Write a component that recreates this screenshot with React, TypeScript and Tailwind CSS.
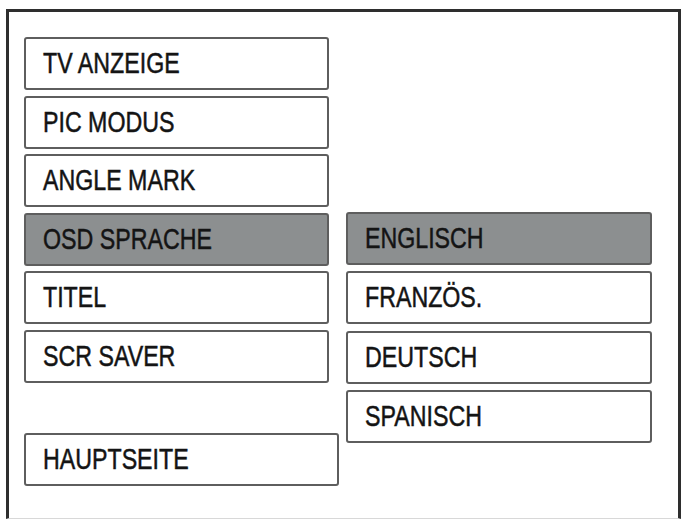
const leftItems = ["TV ANZEIGE", "PIC MODUS", "ANGLE MARK", "OSD SPRACHE", "TITEL", "SCR SAVER"];
const langItems = ["ENGLISCH", "FRANZÖS.", "DEUTSCH", "SPANISCH"];

function MenuBox({ label, active, width }: { label: string; active?: boolean; width: string }) {
  return (
    <div
      className={`flex h-[53px] shrink-0 items-center rounded-[3px] border-2 border-[#5e5e5e] pl-[17px] ${width} ${
        active ? "bg-[#8c8f90]" : "bg-white"
      }`}
    >
      <span className="inline-block origin-left scale-x-[0.8] whitespace-nowrap text-[29px] leading-none text-[#141414] [-webkit-text-stroke:0.5px_#141414] [font-family:'Liberation_Sans',Arial,sans-serif]">
        {label}
      </span>
    </div>
  );
}

export default function App() {
  return (
    <div className="h-[521px] w-[682px] overflow-hidden bg-white">
      <div className="ml-[6px] mt-[9px] flex h-[510px] w-[675px] gap-[7px] border-x-[3px] border-t-[3px] border-b border-x-[#2e2e2e] border-t-[#2e2e2e] border-b-[#d8d8d8] pl-[15px] pt-[25px]">
        <div className="flex flex-col">
          <div className="flex w-[305px] flex-col gap-[5.6px]">
            {leftItems.map((l) => (
              <MenuBox key={l} label={l} active={l === "OSD SPRACHE"} width="w-[305px]" />
            ))}
          </div>
          <div className="mt-[50px]">
            <MenuBox label="HAUPTSEITE" width="w-[315px]" />
          </div>
        </div>
        <div className="mt-[175px] flex flex-col gap-[6.3px]">
          {langItems.map((l) => (
            <MenuBox key={l} label={l} active={l === "ENGLISCH"} width="w-[306px]" />
          ))}
        </div>
      </div>
    </div>
  );
}
